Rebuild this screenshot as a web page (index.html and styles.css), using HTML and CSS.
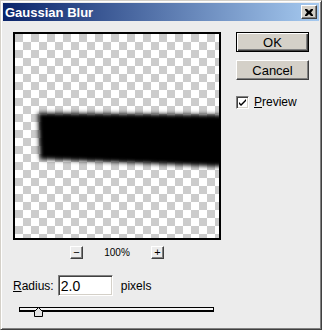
FILE: index.html
```html
<!DOCTYPE html>
<html lang="en">

<head>
  <meta charset="UTF-8">
  <title>Gaussian Blur</title>
  <link rel="stylesheet" href="styles.css">
</head>

<body>
  <div class="window">
    <div class="titlebar">
      <span class="title">Gaussian Blur</span>
      <button class="close">
        <svg width="8" height="7" viewBox="0 0 8 7">
          <path d="M0 0h2l2 2 2-2h2v1l-2 2.5 2 2.5v1h-2l-2-2-2 2h-2v-1l2-2.5-2-2.5z" fill="#000"/>
        </svg>
      </button>
    </div>

    <div class="content">
      <div class="left">
        <div class="preview">
          <svg class="blur-shape" width="204" height="204" viewBox="0 0 204 204">
            <defs>
              <filter id="soft" x="-20%" y="-50%" width="140%" height="200%">
                <feGaussianBlur stdDeviation="2.2"/>
              </filter>
            </defs>
            <polygon points="23,79 240,81 240,134 25,125" fill="#000" filter="url(#soft)"/>
          </svg>
        </div>

        <div class="zoom-row">
          <button class="tiny">&minus;</button>
          <span class="zoom-level">100%</span>
          <button class="tiny">+</button>
        </div>

        <div class="radius-row">
          <label class="radius-label"><u>R</u>adius:</label>
          <input type="text" class="field" value="2.0">
          <span class="unit">pixels</span>
        </div>

        <div class="slider">
          <div class="track"></div>
          <svg class="thumb" width="9" height="10" viewBox="0 0 9 10">
            <path d="M0.5 9.5V4.5L4.5 0.5L8.5 4.5V9.5Z" fill="#e4e4e4" stroke="#000"/>
          </svg>
        </div>
      </div>

      <div class="right">
        <button class="btn default">OK</button>
        <button class="btn">Cancel</button>
        <label class="check">
          <span class="box">
            <svg width="9" height="9" viewBox="0 0 9 9">
              <path d="M1 4l2 2 5-5v2l-5 5-2-2z" fill="#000"/>
            </svg>
          </span>
          <span><u>P</u>review</span>
        </label>
      </div>
    </div>
  </div>
</body>

</html>
```

FILE: styles.css
```css
body {
  margin: 0;
  font-family: "Liberation Sans", Arial, sans-serif;
  font-size: 12px;
  color: #000;
}

.window {
  width: 322px;
  height: 330px;
  box-sizing: border-box;
  background: #ececec;
  border: 1px solid;
  border-color: #d4d0c8 #404040 #404040 #d4d0c8;
  box-shadow: inset 1px 1px #fff, inset -1px -1px #808080;
  padding: 2px;
}

.titlebar {
  height: 18px;
  display: flex;
  align-items: center;
  justify-content: space-between;
  padding: 0 2px 0 2px;
  background: linear-gradient(to right, #0a246a, #a6caf0);
}

.title {
  color: #fff;
  font-weight: bold;
  font-size: 13px;
}

.close {
  width: 16px;
  height: 14px;
  padding: 0;
  display: flex;
  align-items: center;
  justify-content: center;
  background: #d4d0c8;
  border: 1px solid;
  border-color: #fff #404040 #404040 #fff;
  box-shadow: inset -1px -1px #808080;
}

.content {
  display: flex;
  gap: 15px;
  padding: 11px 0 0 10px;
}

.left {
  width: 208px;
}

.preview {
  position: relative;
  width: 204px;
  height: 204px;
  border: 2px solid #000;
  overflow: hidden;
  background-color: #fff;
  background-image: conic-gradient(#fff 25%, #ccc 0 50%, #fff 0 75%, #ccc 0);
  background-size: 16px 16px;
}

.blur-shape {
  position: absolute;
  left: 0;
  top: 0;
}

.zoom-row {
  display: flex;
  justify-content: center;
  align-items: center;
  margin-top: 6px;
}

.tiny {
  width: 13px;
  height: 13px;
  padding: 0;
  font-family: "Liberation Sans", Arial, sans-serif;
  font-size: 11px;
  line-height: 9px;
  background: #ececec;
  border: 1px solid;
  border-color: #fff #404040 #404040 #fff;
  box-shadow: inset -1px -1px #808080;
}

.zoom-level {
  width: 68px;
  text-align: center;
  font-size: 10px;
}

.radius-row {
  display: flex;
  align-items: center;
  margin-top: 16px;
}

.radius-label {
  margin-right: 4px;
}

.field {
  width: 55px;
  height: 21px;
  box-sizing: border-box;
  padding: 0 2px;
  font-family: "Liberation Sans", Arial, sans-serif;
  font-size: 14px;
  background: #fff;
  border: 1px solid;
  border-color: #808080 #fff #fff #808080;
  box-shadow: inset 1px 1px #404040, inset -1px -1px #d4d0c8;
}

.unit {
  margin-left: 8px;
}

.slider {
  position: relative;
  height: 10px;
  margin: 11px 0 0 6px;
}

.track {
  width: 195px;
  height: 5px;
  box-sizing: border-box;
  margin-top: 3px;
  border: 1px solid #000;
  border-bottom-width: 2px;
  background: #f4f4f4;
}

.thumb {
  position: absolute;
  left: 15px;
  top: 0;
}

.right {
  display: flex;
  flex-direction: column;
  width: 73px;
}

.btn {
  height: 20px;
  padding: 0;
  font-family: "Liberation Sans", Arial, sans-serif;
  font-size: 13px;
  background: #d4d0c8;
  border: 1px solid;
  border-color: #fff #404040 #404040 #fff;
  box-shadow: inset -1px -1px #808080;
}

.btn + .btn {
  margin-top: 8px;
}

.btn.default {
  border: 1px solid #000;
  box-shadow: inset 1px 1px #fff, inset -1px -1px #404040, inset -2px -2px #808080;
}

.check {
  display: flex;
  align-items: center;
  gap: 5px;
  margin-top: 15px;
}

.box {
  width: 13px;
  height: 13px;
  box-sizing: border-box;
  display: flex;
  align-items: center;
  justify-content: center;
  background: #fff;
  border: 1px solid;
  border-color: #808080 #fff #fff #808080;
  box-shadow: inset 1px 1px #404040, inset -1px -1px #d4d0c8;
}
```
